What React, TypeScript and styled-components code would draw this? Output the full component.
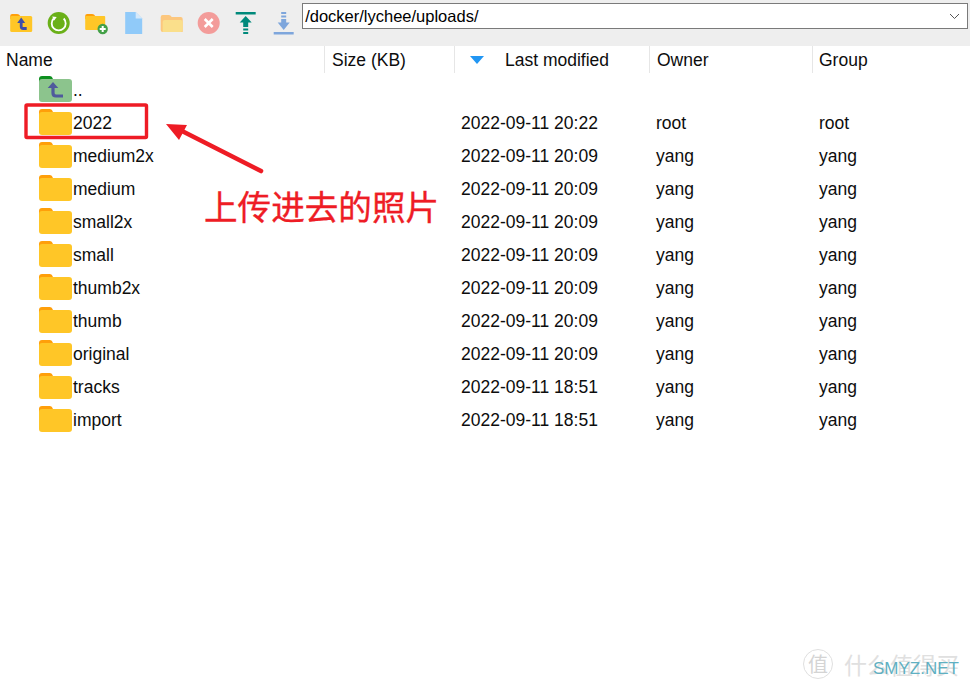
import styled, { createGlobalStyle } from "styled-components";

const GlobalStyle = createGlobalStyle`
  html, body {
    margin: 0;
    padding: 0;
    background: #fff;
    font-family: "Liberation Sans", Arial, sans-serif;
  }
`;

const Page = styled.div`
  position: relative;
  width: 970px;
  height: 687px;
  overflow: hidden;
  background: #fff;
  color: #000;
`;

const Toolbar = styled.div`
  height: 46px;
  background: #eeeeee;
  display: flex;
  align-items: flex-start;
  padding-left: 3px;
  box-sizing: border-box;
`;

const ToolIcons = styled.div`
  display: flex;
  padding-top: 11px;
`;

const ToolIcon = styled.svg`
  width: 37.4px;
  height: 24px;
  display: block;
`;

const PathBox = styled.div`
  margin: 3px 2px 0 auto;
  width: 666px;
  height: 26px;
  box-sizing: border-box;
  border: 1px solid #7a7a7a;
  background: #fff;
  display: flex;
  align-items: center;
  justify-content: space-between;
  padding: 0 7px 0 2px;
  font-size: 16.5px;
`;

const Row = styled.div<{ $height: number }>`
  display: grid;
  grid-template-columns: 324px 130px 195px 163px 158px;
  height: ${(p) => p.$height}px;
  align-items: center;
  font-size: 17.5px;
`;

const HeadCell = styled.div<{ $pad?: number }>`
  height: 27px;
  display: flex;
  align-items: center;
  padding: 1px 0 0 ${(p) => p.$pad ?? 7}px;
  border-left: 1px solid #e6e6e6;
  box-sizing: border-box;
  color: #0d0d0d;
  &:first-child {
    border-left: none;
  }
`;

const SortArrow = styled.span`
  width: 0;
  height: 0;
  border-left: 7px solid transparent;
  border-right: 7px solid transparent;
  border-top: 8px solid #2196f3;
  margin: -1px 21px 0 0;
`;

const NameCell = styled.div`
  display: flex;
  align-items: center;
  padding-left: 39px;
  color: #0d0d0d;
`;

const FolderIcon = styled.svg`
  width: 33px;
  height: 26px;
  display: block;
  flex: none;
  margin: 0 1px 3px 0;
`;

const Cell = styled.div`
  padding-left: 7px;
  color: #0d0d0d;
`;

const List = styled.div`
  padding-top: 1px;
`;

const Annotation = styled.svg`
  position: absolute;
  left: 0;
  top: 0;
  pointer-events: none;
`;

const Note = styled.div`
  position: absolute;
  left: 204px;
  top: 186px;
  font-family: "Noto Sans CJK SC", sans-serif;
  font-size: 33.6px;
  line-height: 40px;
  color: #ee1c25;
  -webkit-text-stroke: 0.35px #ee1c25;
  white-space: nowrap;
`;

const Watermark = styled.div`
  position: absolute;
  left: 803px;
  top: 647px;
  display: flex;
  align-items: center;
  gap: 11px;
  font-family: "Noto Sans CJK SC", sans-serif;
  font-size: 23px;
  color: #e0e0e0;
  white-space: nowrap;
`;

const Badge = styled.span`
  width: 28px;
  height: 28px;
  border: 1px solid #e0e0e0;
  border-radius: 50%;
  font-size: 20px;
  line-height: 28px;
  text-align: center;
  color: #d4d4d4;
`;

const SiteMark = styled.div`
  position: absolute;
  left: 873px;
  top: 659px;
  font-size: 17px;
  color: #5fb0c2;
  white-space: nowrap;
`;

const Folder = () => (
  <FolderIcon viewBox="0 0 33 26">
    <path d="M0 3q0-3 3-3h8q2 0 3 3v6H0z" fill="#ff9f0a" />
    <rect x="0" y="3" width="33" height="23" rx="3" fill="#ffc627" />
  </FolderIcon>
);

const UpFolder = () => (
  <FolderIcon viewBox="0 0 33 26">
    <path d="M0 3q0-3 3-3h8q2 0 3 3v6H0z" fill="#0d8f1f" />
    <rect x="0" y="3" width="33" height="23" rx="3" fill="#8cc48d" />
    <path d="M14 10v7q0 3 3 3h7" fill="none" stroke="#4f5a9c" strokeWidth="3.2" />
    <path d="M8.700 12L14 6l5.300 6z" fill="#4f5a9c" />
  </FolderIcon>
);

const files = [
  { name: "2022", date: "2022-09-11 20:22", user: "root" },
  { name: "medium2x", date: "2022-09-11 20:09", user: "yang" },
  { name: "medium", date: "2022-09-11 20:09", user: "yang" },
  { name: "small2x", date: "2022-09-11 20:09", user: "yang" },
  { name: "small", date: "2022-09-11 20:09", user: "yang" },
  { name: "thumb2x", date: "2022-09-11 20:09", user: "yang" },
  { name: "thumb", date: "2022-09-11 20:09", user: "yang" },
  { name: "original", date: "2022-09-11 20:09", user: "yang" },
  { name: "tracks", date: "2022-09-11 18:51", user: "yang" },
  { name: "import", date: "2022-09-11 18:51", user: "yang" },
];

// toolbar icons share one box, x runs from the icon's centre
const iconBox = "-18.7 0 37.4 24";

const App = () => {
  return (
    <Page>
      <GlobalStyle />
      <Toolbar>
        <ToolIcons>
          <ToolIcon viewBox={iconBox}>
            <path d="M-11.500 5q0-2 2-2h5q2 0 3 2v3h-10z" fill="#ff9f0a" />
            <rect x="-11.500" y="5" width="22" height="16" rx="1.500" fill="#ffc627" />
            <path d="M-.5 11v4.500q0 2 2 2H5" fill="none" stroke="#3f4da8" strokeWidth="2.800" />
            <path d="M-4.500 12l4-5.500 4 5.500z" fill="#3f4da8" />
          </ToolIcon>
          <ToolIcon viewBox={iconBox}>
            <circle cx="0" cy="12" r="11" fill="#6ab018" />
            <path d="M-5 7.500a7 7 0 1 0 10 0" fill="none" stroke="#fff" strokeWidth="1.800" />
            <path d="M-6.500 5.500l4.500 .5-2.500 3.500z" fill="#fff" />
          </ToolIcon>
          <ToolIcon viewBox={iconBox}>
            <path d="M-11.500 5q0-2 2-2h5q2 0 3 2v3h-10z" fill="#ff9f0a" />
            <rect x="-11.500" y="5" width="20" height="14" rx="1" fill="#ffc627" />
            <circle cx="6" cy="18" r="5.200" fill="#43a047" />
            <path d="M3 18h6M6 15v6" stroke="#fff" strokeWidth="2" />
          </ToolIcon>
          <ToolIcon viewBox={iconBox}>
            <path d="M-8.500 1H2l6.500 6.500V23h-17z" fill="#90caf9" />
            <path d="M2 1l6.500 6.500H2z" fill="#d4e9fb" />
          </ToolIcon>
          <ToolIcon viewBox={iconBox}>
            <path d="M-11 6q0-2 2-2h6q2 0 3 2h9q2 0 2 2v13H-9q-2 0-2-2z" fill="#fcc77e" />
            <path d="M-9 21V11q0-2 2-2h16q2 0 2 2v8q0 2-2 2z" fill="#fadf8b" />
          </ToolIcon>
          <ToolIcon viewBox={iconBox}>
            <circle cx="0" cy="12" r="11" fill="#f39c9a" />
            <path d="M-4 8l8 8M4 8l-8 8" stroke="#fff" strokeWidth="2.600" />
          </ToolIcon>
          <ToolIcon viewBox={iconBox}>
            <path d="M-10 1H10V3.500H-10z" fill="#00897b" />
            <path d="M0 5l6 6.500H2.500V16h-5v-4.500H-6z" fill="#00897b" />
            <path d="M-2.500 17.500h5v2h-5zM-2.500 21h5v2h-5z" fill="#00897b" />
          </ToolIcon>
          <ToolIcon viewBox={iconBox}>
            <path d="M-2.500 1h5v2h-5zM-2.500 4.500h5v2h-5z" fill="#7ea6dc" />
            <path d="M-2.500 8h5v3.500H6L0 19l-6-7.500h3.500z" fill="#7ea6dc" />
            <path d="M-10 21H10V23.500H-10z" fill="#7ea6dc" />
          </ToolIcon>
        </ToolIcons>
        <PathBox>
          <span>/docker/lychee/uploads/</span>
          <svg width="11" height="7" viewBox="0 0 11 7">
            <path d="M1 1l4.500 4.500L10 1" fill="none" stroke="#555" strokeWidth="1" />
          </svg>
        </PathBox>
      </Toolbar>

      <Row $height={27}>
        <HeadCell $pad={6}>Name</HeadCell>
        <HeadCell>Size (KB)</HeadCell>
        <HeadCell $pad={15}>
          <SortArrow />
          Last modified
        </HeadCell>
        <HeadCell>Owner</HeadCell>
        <HeadCell $pad={6}>Group</HeadCell>
      </Row>

      <List>
        <Row $height={33}>
          <NameCell>
            <UpFolder />
            <span>..</span>
          </NameCell>
        </Row>
        {files.map((f) => (
          <Row $height={33} key={f.name}>
            <NameCell>
              <Folder />
              <span>{f.name}</span>
            </NameCell>
            <div />
            <Cell>{f.date}</Cell>
            <Cell>{f.user}</Cell>
            <Cell>{f.user}</Cell>
          </Row>
        ))}
      </List>

      <Annotation width="970" height="687" viewBox="0 0 970 687">
        <rect x="26" y="105" width="120.500" height="32.500" rx="1" fill="none" stroke="#ee1c25" strokeWidth="3.400" />
        <path d="M261 171L182 131" stroke="#ee1c25" strokeWidth="4.600" strokeLinecap="round" />
        <path d="M166 124l21 1-8 15z" fill="#ee1c25" />
      </Annotation>
      <Note>上传进去的照片</Note>

      <Watermark>
        <Badge>值</Badge>
        <span>什么值得买</span>
      </Watermark>
      <SiteMark>SMYZ.NET</SiteMark>
    </Page>
  );
};

export default App;
